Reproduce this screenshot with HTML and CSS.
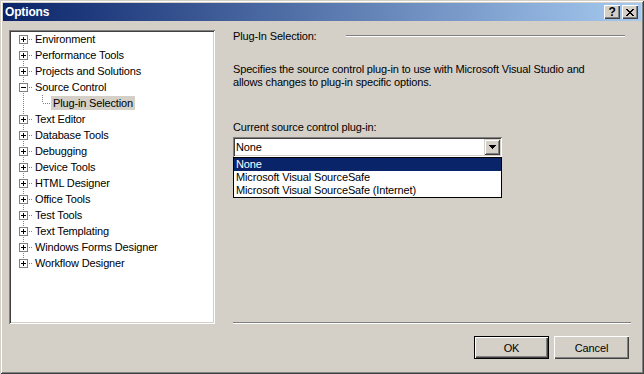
FILE: index.html
```html
<!DOCTYPE html>
<html lang="en">
<head>
<meta charset="UTF-8" />
<title>Options</title>
<link rel="stylesheet" href="styles.css">
</head>
<body>

<div class="window">
  <div class="titlebar">
    <span class="title">Options</span>
    <div class="caption-btns">
      <span class="cap-btn help">?</span>
      <span class="cap-btn">
        <svg width="8" height="7" viewBox="0 0 8 7"><path d="M0 0h2v1h1v1h2V1h1V0h2v1H7v1H6v1H5v1h1v1h1v1h1v1H6V6H5V5H3v1H2v1H0V6h1V5h1V4h1V3H2V2H1V1H0z" fill="#000"/></svg>
      </span>
    </div>
  </div>

  <div class="body">
    <div class="tree">
      <ul class="nodes">
        <li class="node first"><span class="expander plus"></span><span class="hline"></span><span class="label">Environment</span></li>
        <li class="node"><span class="expander plus"></span><span class="hline"></span><span class="label">Performance Tools</span></li>
        <li class="node"><span class="expander plus"></span><span class="hline"></span><span class="label">Projects and Solutions</span></li>
        <li class="node"><span class="expander"></span><span class="hline"></span><span class="label">Source Control</span></li>
        <li class="node child"><span class="hline long"></span><span class="label selected">Plug-in Selection</span></li>
        <li class="node"><span class="expander plus"></span><span class="hline"></span><span class="label">Text Editor</span></li>
        <li class="node"><span class="expander plus"></span><span class="hline"></span><span class="label">Database Tools</span></li>
        <li class="node"><span class="expander plus"></span><span class="hline"></span><span class="label">Debugging</span></li>
        <li class="node"><span class="expander plus"></span><span class="hline"></span><span class="label">Device Tools</span></li>
        <li class="node"><span class="expander plus"></span><span class="hline"></span><span class="label">HTML Designer</span></li>
        <li class="node"><span class="expander plus"></span><span class="hline"></span><span class="label">Office Tools</span></li>
        <li class="node"><span class="expander plus"></span><span class="hline"></span><span class="label">Test Tools</span></li>
        <li class="node"><span class="expander plus"></span><span class="hline"></span><span class="label">Text Templating</span></li>
        <li class="node"><span class="expander plus"></span><span class="hline"></span><span class="label">Windows Forms Designer</span></li>
        <li class="node last"><span class="expander plus"></span><span class="hline"></span><span class="label">Workflow Designer</span></li>
      </ul>
    </div>

    <div class="pane">
      <div class="group-head">
        <span>Plug-In Selection:</span>
        <span class="etched"></span>
      </div>
      <p class="desc">Specifies the source control plug-in to use with Microsoft Visual Studio and allows changes to plug-in specific options.</p>
      <div class="field-label">Current source control plug-in:</div>
      <div class="combo-wrap">
        <div class="combo">
          <span class="combo-text">None</span>
          <span class="drop-btn">
            <svg width="7" height="4" viewBox="0 0 7 4"><path d="M0 0h7v1H6v1H5v1H4v1H3V3H2V2H1V1H0z" fill="#000"/></svg>
          </span>
        </div>
        <ul class="droplist">
          <li class="active">None</li>
          <li>Microsoft Visual SourceSafe</li>
          <li>Microsoft Visual SourceSafe (Internet)</li>
        </ul>
      </div>
      <div class="sep"></div>
    </div>

    <div class="buttons">
      <button class="btn default">OK</button>
      <button class="btn">Cancel</button>
    </div>
  </div>
</div>

</body>
</html>
```

FILE: styles.css
```css
/* Base */
html, body {
  margin: 0;
  padding: 0;
  background: #d4d0c8;
  font-family: Tahoma, "Liberation Sans", Arial, sans-serif;
  font-size: 11px;
  letter-spacing: -0.15px;
  color: #000;
}

/* Window frame */
.window {
  width: 644px;
  height: 374px;
  box-sizing: border-box;
  padding: 3px;
  display: flex;
  flex-direction: column;
  background: #d4d0c8;
  box-shadow:
    inset 1px 1px #d4d0c8,
    inset -1px -1px #404040,
    inset 2px 2px #fff,
    inset -2px -2px #808080;
}

/* Title bar */
.titlebar {
  height: 18px;
  display: flex;
  align-items: center;
  justify-content: space-between;
  padding: 0 3px 0 2px;
  background: linear-gradient(to right, #0a246a, #a6caf0);
}
.title {
  color: #fff;
  font-weight: bold;
  font-size: 12px;
}
.caption-btns {
  display: flex;
  gap: 2px;
}
.cap-btn {
  width: 16px;
  height: 14px;
  box-sizing: border-box;
  display: flex;
  align-items: center;
  justify-content: center;
  background: #d4d0c8;
  box-shadow:
    inset 1px 1px #fff,
    inset -1px -1px #404040,
    inset -2px -2px #808080;
}
.cap-btn.help {
  font-weight: bold;
  font-size: 12px;
  line-height: 14px;
}

/* Dialog body */
.body {
  flex: 1;
  display: grid;
  grid-template-columns: 206px 1fr;
  grid-template-rows: 1fr auto;
  column-gap: 18px;
  row-gap: 12px;
  padding: 9px 12px 12px 6px;
}

/* Tree view */
.tree {
  background: #fff;
  box-shadow:
    inset 1px 1px #808080,
    inset -1px -1px #fff,
    inset 2px 2px #404040,
    inset -2px -2px #d4d0c8;
  padding: 1px 2px 2px;
}
.nodes {
  list-style: none;
  margin: 0;
  padding: 0;
}
.node {
  position: relative;
  height: 16px;
  display: flex;
  align-items: center;
  padding-left: 8px;
}
.node::before {
  content: "";
  position: absolute;
  left: 12px;
  top: 0;
  bottom: 0;
  width: 1px;
  background: repeating-linear-gradient(to bottom, #808080 0 1px, transparent 1px 2px);
}
.node.first::before { top: 8px; }
.node.last::before { bottom: 8px; }

.expander {
  position: relative;
  z-index: 1;
  width: 9px;
  height: 9px;
  box-sizing: border-box;
  border: 1px solid #808080;
  background: #fff;
}
.expander::before {
  content: "";
  position: absolute;
  left: 1px;
  top: 3px;
  width: 5px;
  height: 1px;
  background: #000;
}
.expander.plus::after {
  content: "";
  position: absolute;
  left: 3px;
  top: 1px;
  width: 1px;
  height: 5px;
  background: #000;
}
.hline {
  width: 4px;
  height: 1px;
  margin-left: 1px;
  background: repeating-linear-gradient(to right, #808080 0 1px, transparent 1px 2px);
}
.label {
  padding: 0 2px;
  height: 14px;
  line-height: 14px;
  white-space: nowrap;
}
.label.selected {
  background: #d4d0c8;
}

/* Child node elbow */
.node.child {
  padding-left: 32px;
}
.node.child::after {
  content: "";
  position: absolute;
  left: 31px;
  top: 0;
  height: 8px;
  width: 1px;
  background: repeating-linear-gradient(to bottom, #808080 0 1px, transparent 1px 2px);
}
.hline.long {
  width: 8px;
  margin-left: 0;
}

/* Right pane */
.pane {
  display: flex;
  flex-direction: column;
}
.group-head {
  display: flex;
  align-items: center;
  height: 12px;
}
.etched {
  flex: none;
  margin-left: auto;
  margin-right: 4px;
  width: 279px;
  height: 0;
  border-top: 1px solid #808080;
  border-bottom: 1px solid #fff;
}
.desc {
  margin: 21px 0 0 0;
  width: 366px;
  line-height: 13px;
}
.field-label {
  margin-top: 32px;
  line-height: 13px;
}
.combo-wrap {
  position: relative;
  margin-top: 3px;
  width: 269px;
}
.combo {
  height: 20px;
  box-sizing: border-box;
  display: flex;
  align-items: center;
  justify-content: space-between;
  padding: 2px;
  background: #fff;
  box-shadow:
    inset 1px 1px #808080,
    inset -1px -1px #fff,
    inset 2px 2px #404040,
    inset -2px -2px #d4d0c8;
}
.combo-text {
  padding-left: 1px;
}
.drop-btn {
  width: 16px;
  height: 16px;
  box-sizing: border-box;
  display: flex;
  align-items: center;
  justify-content: center;
  background: #d4d0c8;
  box-shadow:
    inset 1px 1px #d4d0c8,
    inset -1px -1px #404040,
    inset 2px 2px #fff,
    inset -2px -2px #808080;
}

/* Open drop-down list overlays the content below */
.droplist {
  position: absolute;
  top: 20px;
  left: 0;
  right: 0;
  margin: 0;
  padding: 0;
  list-style: none;
  background: #fff;
  border: 1px solid #000;
}
.droplist li {
  height: 13px;
  line-height: 13px;
  padding-left: 2px;
  white-space: nowrap;
}
.droplist li.active {
  background: #0a246a;
  color: #fff;
}

.sep {
  margin-top: auto;
  margin-right: -2px;
  border-top: 1px solid #808080;
  border-bottom: 1px solid #fff;
}

/* Dialog buttons */
.buttons {
  grid-column: 1 / -1;
  display: flex;
  justify-content: flex-end;
  gap: 5px;
}
.btn {
  width: 75px;
  height: 23px;
  box-sizing: border-box;
  font: inherit;
  letter-spacing: inherit;
  color: #000;
  background: #d4d0c8;
  border: none;
  padding: 0;
  box-shadow:
    inset 1px 1px #fff,
    inset -1px -1px #404040,
    inset -2px -2px #808080;
}
.btn.default {
  border: 1px solid #000;
}
```
